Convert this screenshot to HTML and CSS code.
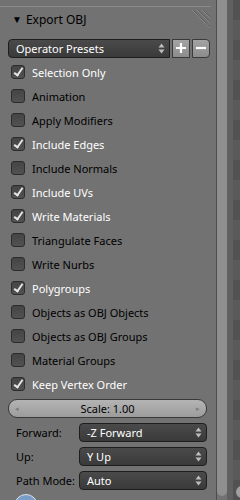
FILE: index.html
```html
<!DOCTYPE html>
<html>
<head>
<meta charset="utf-8">
<link rel="stylesheet" href="styles.css">
</head>
<body>
<div class="screen">
  <div class="panel">
    <div class="topline"></div>
    <div class="header">
      <span class="tri">▼</span><span class="title">Export OBJ</span>
      <svg class="grip" width="20" height="18" viewBox="0 0 20 18">
        <path d="M2 0 L20 18 M7 0 L20 13 M12 0 L20 8" stroke="#8a8a8a" stroke-width="1" fill="none"/>
        <path d="M3 0 L21 18 M8 0 L21 13 M13 0 L21 8" stroke="#5e5e5e" stroke-width="1" fill="none"/>
      </svg>
    </div>
    <div class="line presets">
      <div class="dropdown wide"><span>Operator Presets</span>
        <svg class="updown" width="7" height="11" viewBox="0 0 7 11"><path d="M0.5 4.5 L3.5 0.5 L6.5 4.5 Z M0.5 6.5 L3.5 10.5 L6.5 6.5 Z" fill="#bdbdbd"/></svg>
      </div>
      <div class="btn"><svg width="12" height="12" viewBox="0 0 12 12"><path d="M6 1 V11 M1 6 H11" stroke="#fff" stroke-width="2.2"/></svg></div>
      <div class="btn"><svg width="12" height="12" viewBox="0 0 12 12"><path d="M1 6 H11" stroke="#fff" stroke-width="2.2"/></svg></div>
    </div>
    <div class="row on"><span class="cb"></span>Selection Only</div>
    <div class="row"><span class="cb"></span>Animation</div>
    <div class="row"><span class="cb"></span>Apply Modifiers</div>
    <div class="row on"><span class="cb"></span>Include Edges</div>
    <div class="row"><span class="cb"></span>Include Normals</div>
    <div class="row on"><span class="cb"></span>Include UVs</div>
    <div class="row on"><span class="cb"></span>Write Materials</div>
    <div class="row"><span class="cb"></span>Triangulate Faces</div>
    <div class="row"><span class="cb"></span>Write Nurbs</div>
    <div class="row on"><span class="cb"></span>Polygroups</div>
    <div class="row"><span class="cb"></span>Objects as OBJ Objects</div>
    <div class="row"><span class="cb"></span>Objects as OBJ Groups</div>
    <div class="row"><span class="cb"></span>Material Groups</div>
    <div class="row on"><span class="cb"></span>Keep Vertex Order</div>
    <div class="line slider-line">
      <div class="slider"><span class="arr">◂</span><span>Scale: 1.00</span><span class="arr">▸</span></div>
    </div>
    <div class="line prop"><span class="lbl">Forward:</span><div class="dropdown"><span>-Z Forward</span><svg class="updown" width="7" height="11" viewBox="0 0 7 11"><path d="M0.5 4.5 L3.5 0.5 L6.5 4.5 Z M0.5 6.5 L3.5 10.5 L6.5 6.5 Z" fill="#bdbdbd"/></svg></div></div>
    <div class="line prop"><span class="lbl">Up:</span><div class="dropdown"><span>Y Up</span><svg class="updown" width="7" height="11" viewBox="0 0 7 11"><path d="M0.5 4.5 L3.5 0.5 L6.5 4.5 Z M0.5 6.5 L3.5 10.5 L6.5 6.5 Z" fill="#bdbdbd"/></svg></div></div>
    <div class="line prop"><span class="lbl">Path Mode:</span><div class="dropdown"><span>Auto</span><svg class="updown" width="7" height="11" viewBox="0 0 7 11"><path d="M0.5 4.5 L3.5 0.5 L6.5 4.5 Z M0.5 6.5 L3.5 10.5 L6.5 6.5 Z" fill="#bdbdbd"/></svg></div></div>
    <div class="circle-row"><span class="circle"></span></div>
  </div>
  <div class="scroll"><div class="thumb"></div></div>
  <div class="gutter"></div>
  <div class="edge"><span class="knob"></span></div>
</div>
</body>
</html>
```
FILE: styles.css
```css
html, body {
  margin: 0;
  padding: 0;
  background: #727272;
}
.screen {
  display: flex;
  width: 240px;
  height: 500px;
  overflow: hidden;
  font-family: "Noto Sans", "Open Sans", sans-serif;
  font-size: 11px;
  color: #000;
}
.panel {
  width: 216px;
  flex: none;
  background: #727272;
  border-right: 1px solid #4e4e4e;
  display: flex;
  flex-direction: column;
}
.topline {
  margin-top: 6px;
  width: 211px;
  height: 1px;
  background: #8a8a8a;
  flex: none;
}
.header {
  height: 24px;
  flex: none;
  display: flex;
  align-items: center;
  padding-left: 12px;
  position: relative;
  font-size: 12px;
}
.tri {
  font-size: 10px;
  margin-right: 4px;
}
.grip {
  position: absolute;
  right: 6px;
  top: 3px;
}
.line {
  height: 24px;
  flex: none;
  display: flex;
  align-items: center;
}
.presets {
  margin-top: 5px;
  padding-left: 8px;
  gap: 2px;
}
.presets > * {
  height: 19px;
}
.dropdown {
  flex: 1;
  height: 19px;
  display: flex;
  align-items: center;
  justify-content: space-between;
  background: linear-gradient(#4a4a4a, #3a3a3a);
  border: 1px solid #1e1e1e;
  border-radius: 4px;
  color: #fff;
  padding: 0 4px 0 7px;
  box-sizing: border-box;
}
.dropdown.wide {
  flex: none;
  width: 162px;
  border-radius: 4px 0 0 4px;
}
.btn {
  width: 18px;
  display: flex;
  align-items: center;
  justify-content: center;
  background: linear-gradient(#a3a3a3, #8c8c8c);
  border: 1px solid #3a3a3a;
  box-sizing: border-box;
}
.btn:last-child {
  border-radius: 0 4px 4px 0;
}
.row {
  height: 24px;
  flex: none;
  display: flex;
  align-items: center;
  padding-left: 11px;
}
.cb {
  width: 12px;
  height: 12px;
  border: 1px solid #2c2c2c;
  border-radius: 3px;
  background: linear-gradient(#444, #525252);
  margin-right: 7px;
  position: relative;
  flex: none;
}
.row.on {
  color: #fff;
}
.row.on .cb::after {
  content: "";
  position: absolute;
  left: 4px;
  top: 0px;
  width: 3px;
  height: 8px;
  border: solid #e6e6e6;
  border-width: 0 2px 2px 0;
  transform: rotate(35deg);
}
.slider-line {
  padding: 0 9px 0 8px;
}
.slider {
  flex: 1;
  height: 19px;
  border: 1px solid #3a3a3a;
  border-radius: 9px;
  background: linear-gradient(#b4b4b4, #9c9c9c);
  display: flex;
  align-items: center;
  justify-content: space-between;
  padding: 0 6px;
  box-sizing: border-box;
}
.arr {
  font-size: 7px;
  color: #7a7a7a;
}
.prop {
  padding-left: 16px;
  padding-right: 9px;
}
.prop .lbl {
  width: 63px;
  flex: none;
}
.circle-row {
  height: 10px;
  padding-left: 14px;
  margin-top: 2px;
}
.circle {
  display: block;
  width: 22px;
  height: 22px;
  border-radius: 50%;
  background: #7a9cc8;
  border: 1px solid #e0e0e0;
}
.scroll {
  width: 10px;
  flex: none;
  background: #8f8f8f;
  border-radius: 0 0 5px 5px;
  margin-bottom: 4px;
}
.gutter {
  width: 6px;
  flex: none;
  background: #606060;
}
.edge {
  flex: 1;
  background: repeating-linear-gradient(#525252 0 20px, #5a5a5a 20px 40px);
  position: relative;
}
.knob {
  position: absolute;
  left: 3px;
  top: 486px;
  width: 12px;
  height: 12px;
  border-radius: 50%;
  background: #a0a0a0;
}
```
